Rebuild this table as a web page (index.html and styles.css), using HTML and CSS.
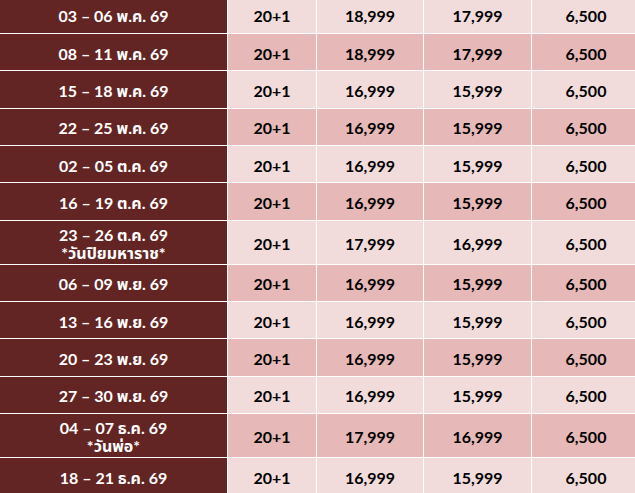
FILE: index.html
```html
<!DOCTYPE html>
<html lang="th">
<head>
<meta charset="utf-8">
<link rel="stylesheet" href="styles.css">
</head>
<body>
<div class="table">
  <div class="row odd"><div class="date">03 – 06 พ.ค. 69</div><div>20+1</div><div>18,999</div><div>17,999</div><div>6,500</div></div>
  <div class="row even"><div class="date">08 – 11 พ.ค. 69</div><div>20+1</div><div>18,999</div><div>17,999</div><div>6,500</div></div>
  <div class="row odd"><div class="date">15 – 18 พ.ค. 69</div><div>20+1</div><div>16,999</div><div>15,999</div><div>6,500</div></div>
  <div class="row even"><div class="date">22 – 25 พ.ค. 69</div><div>20+1</div><div>16,999</div><div>15,999</div><div>6,500</div></div>
  <div class="row odd"><div class="date">02 – 05 ต.ค. 69</div><div>20+1</div><div>16,999</div><div>15,999</div><div>6,500</div></div>
  <div class="row even"><div class="date">16 – 19 ต.ค. 69</div><div>20+1</div><div>16,999</div><div>15,999</div><div>6,500</div></div>
  <div class="row odd tall"><div class="date">23 – 26 ต.ค. 69<br>*วันปิยมหาราช*</div><div>20+1</div><div>17,999</div><div>16,999</div><div>6,500</div></div>
  <div class="row even"><div class="date">06 – 09 พ.ย. 69</div><div>20+1</div><div>16,999</div><div>15,999</div><div>6,500</div></div>
  <div class="row odd"><div class="date">13 – 16 พ.ย. 69</div><div>20+1</div><div>16,999</div><div>15,999</div><div>6,500</div></div>
  <div class="row even"><div class="date">20 – 23 พ.ย. 69</div><div>20+1</div><div>16,999</div><div>15,999</div><div>6,500</div></div>
  <div class="row odd"><div class="date">27 – 30 พ.ย. 69</div><div>20+1</div><div>16,999</div><div>15,999</div><div>6,500</div></div>
  <div class="row even tall"><div class="date">04 – 07 ธ.ค. 69<br>*วันพ่อ*</div><div>20+1</div><div>17,999</div><div>16,999</div><div>6,500</div></div>
  <div class="row odd"><div class="date">18 – 21 ธ.ค. 69</div><div>20+1</div><div>16,999</div><div>15,999</div><div>6,500</div></div>
</div>
</body>
</html>
```
FILE: styles.css
```css
html, body {
  margin: 0;
  padding: 0;
  background: #ffffff;
  overflow: hidden;
}
.table {
  display: flex;
  flex-direction: column;
  gap: 1px;
  margin-top: -3.33px;
  width: 640px;
  font-family: Lato, "Noto Sans Thai", "Noto Sans", sans-serif;
  font-weight: 700;
  font-size: 16px;
  line-height: 18px;
  color: #000;
}
.row {
  display: grid;
  grid-template-columns: 227px 88px 106px 107px 1fr;
  column-gap: 1px;
  height: 36.33px;
}
.row.tall {
  height: 43px;
}
.row > div {
  display: flex;
  align-items: center;
  justify-content: center;
  text-align: center;
  padding-top: 3px;
  box-sizing: border-box;
}
.odd > div { background: #f2dcdb; }
.even > div { background: #e6b8b7; }
.row > .date {
  background: #632523;
  color: #ffffff;
}
```
